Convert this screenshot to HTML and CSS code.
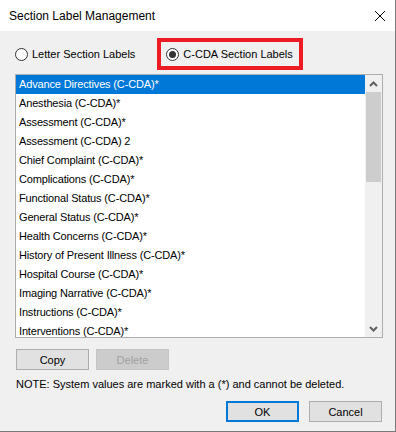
FILE: index.html
```html
<!DOCTYPE html>
<html lang="en">

<head>
    <meta charset="UTF-8">
    <title>Section Label Management</title>
    <link rel="stylesheet" href="styles.css">
</head>

<body>
    <div class="window">
        <div class="titlebar">
            <span class="title">Section Label Management</span>
            <svg class="close" width="12" height="12" viewBox="0 0 12 12">
                <path d="M1 1 L11 11 M11 1 L1 11" stroke="#000" stroke-width="1" fill="none" />
            </svg>
        </div>

        <div class="content">
            <div class="radio-row">
                <label class="radio">
                    <span class="circle"></span>
                    <span>Letter Section Labels</span>
                </label>
                <div class="highlight">
                    <label class="radio">
                        <span class="circle checked"></span>
                        <span>C-CDA Section Labels</span>
                    </label>
                </div>
            </div>

            <div class="listbox">
                <ul class="items">
                    <li class="selected">Advance Directives (C-CDA)*</li>
                    <li>Anesthesia (C-CDA)*</li>
                    <li>Assessment (C-CDA)*</li>
                    <li>Assessment (C-CDA) 2</li>
                    <li>Chief Complaint (C-CDA)*</li>
                    <li>Complications (C-CDA)*</li>
                    <li>Functional Status (C-CDA)*</li>
                    <li>General Status (C-CDA)*</li>
                    <li>Health Concerns (C-CDA)*</li>
                    <li>History of Present Illness (C-CDA)*</li>
                    <li>Hospital Course (C-CDA)*</li>
                    <li>Imaging Narrative (C-CDA)*</li>
                    <li>Instructions (C-CDA)*</li>
                    <li>Interventions (C-CDA)*</li>
                </ul>
                <div class="scrollbar">
                    <div class="arrow">
                        <svg width="9" height="6" viewBox="0 0 9 6">
                            <path d="M1 5 L4.5 1.5 L8 5" stroke="#606060" stroke-width="2" fill="none" />
                        </svg>
                    </div>
                    <div class="thumb"></div>
                    <div class="track"></div>
                    <div class="arrow">
                        <svg width="9" height="6" viewBox="0 0 9 6">
                            <path d="M1 1 L4.5 4.5 L8 1" stroke="#606060" stroke-width="2" fill="none" />
                        </svg>
                    </div>
                </div>
            </div>

            <div class="button-row">
                <button class="btn">Copy</button>
                <button class="btn disabled">Delete</button>
            </div>

            <p class="note">NOTE: System values are marked with a (*) and cannot be deleted.</p>

            <div class="dialog-buttons">
                <button class="btn default">OK</button>
                <button class="btn">Cancel</button>
            </div>
        </div>
    </div>
</body>

</html>
```

FILE: styles.css
```css
html,
body {
    margin: 0;
    padding: 0;
}

body {
    font-family: "Liberation Sans", Arial, sans-serif;
    font-size: 11px;
    color: #000;
    background: #f0f0f0;
}

.window {
    width: 395px;
    height: 431px;
    background: #f0f0f0;
    border-right: 1px solid #7a7a7a;
    border-bottom: 1px solid #7a7a7a;
    overflow: hidden;
}

.titlebar {
    height: 31px;
    background: #fff;
    display: flex;
    align-items: center;
    justify-content: space-between;
    padding: 0 9px 0 9px;
}

.title {
    font-size: 12px;
}

.content {
    padding: 7px 13px 0 15px;
}

/* radio buttons */
.radio-row {
    display: flex;
    align-items: center;
    height: 32px;
}

.radio {
    display: flex;
    align-items: center;
    gap: 4px;
}

.circle {
    box-sizing: border-box;
    width: 13px;
    height: 13px;
    border: 1px solid #333;
    border-radius: 50%;
    background: #fff;
    display: flex;
    align-items: center;
    justify-content: center;
}

.circle.checked::after {
    content: "";
    width: 7px;
    height: 7px;
    border-radius: 50%;
    background: #333;
}

.highlight {
    box-sizing: border-box;
    height: 32px;
    margin-left: 22px;
    border: 4px solid #ed1c24;
    padding: 0 6px 0 5px;
    display: flex;
    align-items: center;
}

/* list */
.listbox {
    margin-top: 4px;
    width: 366px;
    height: 262px;
    border: 1px solid #adadad;
    background: #fff;
    display: flex;
    overflow: hidden;
}

.items {
    list-style: none;
    margin: 0;
    padding: 0;
    flex: 1;
}

.items li {
    height: 19px;
    line-height: 19px;
    padding-left: 3px;
    white-space: nowrap;
    letter-spacing: -0.15px;
}

.items li.selected {
    background: #0078d7;
    color: #fff;
}

.scrollbar {
    width: 17px;
    background: #f0f0f0;
    display: flex;
    flex-direction: column;
}

.arrow {
    height: 17px;
    display: flex;
    align-items: center;
    justify-content: center;
}

.thumb {
    height: 90px;
    margin: 0 1px;
    background: #cdcdcd;
}

.track {
    flex: 1;
}

/* buttons */
.button-row {
    display: flex;
    gap: 7px;
    margin-top: 11px;
    padding-left: 1px;
}

.btn {
    box-sizing: border-box;
    width: 73px;
    height: 21px;
    padding: 0;
    font-family: "Liberation Sans", Arial, sans-serif;
    font-size: 11px;
    color: #000;
    background: #e1e1e1;
    border: 1px solid #adadad;
}

.btn.disabled {
    background: #cccccc;
    border: 1px dotted #bfbfbf;
    color: #a0a0a0;
}

.btn.default {
    border: 2px solid #0078d7;
}

.note {
    margin: 8px 0 0 1px;
    line-height: 13px;
}

.dialog-buttons {
    display: flex;
    justify-content: flex-end;
    gap: 10px;
    margin-top: 10px;
}
```
